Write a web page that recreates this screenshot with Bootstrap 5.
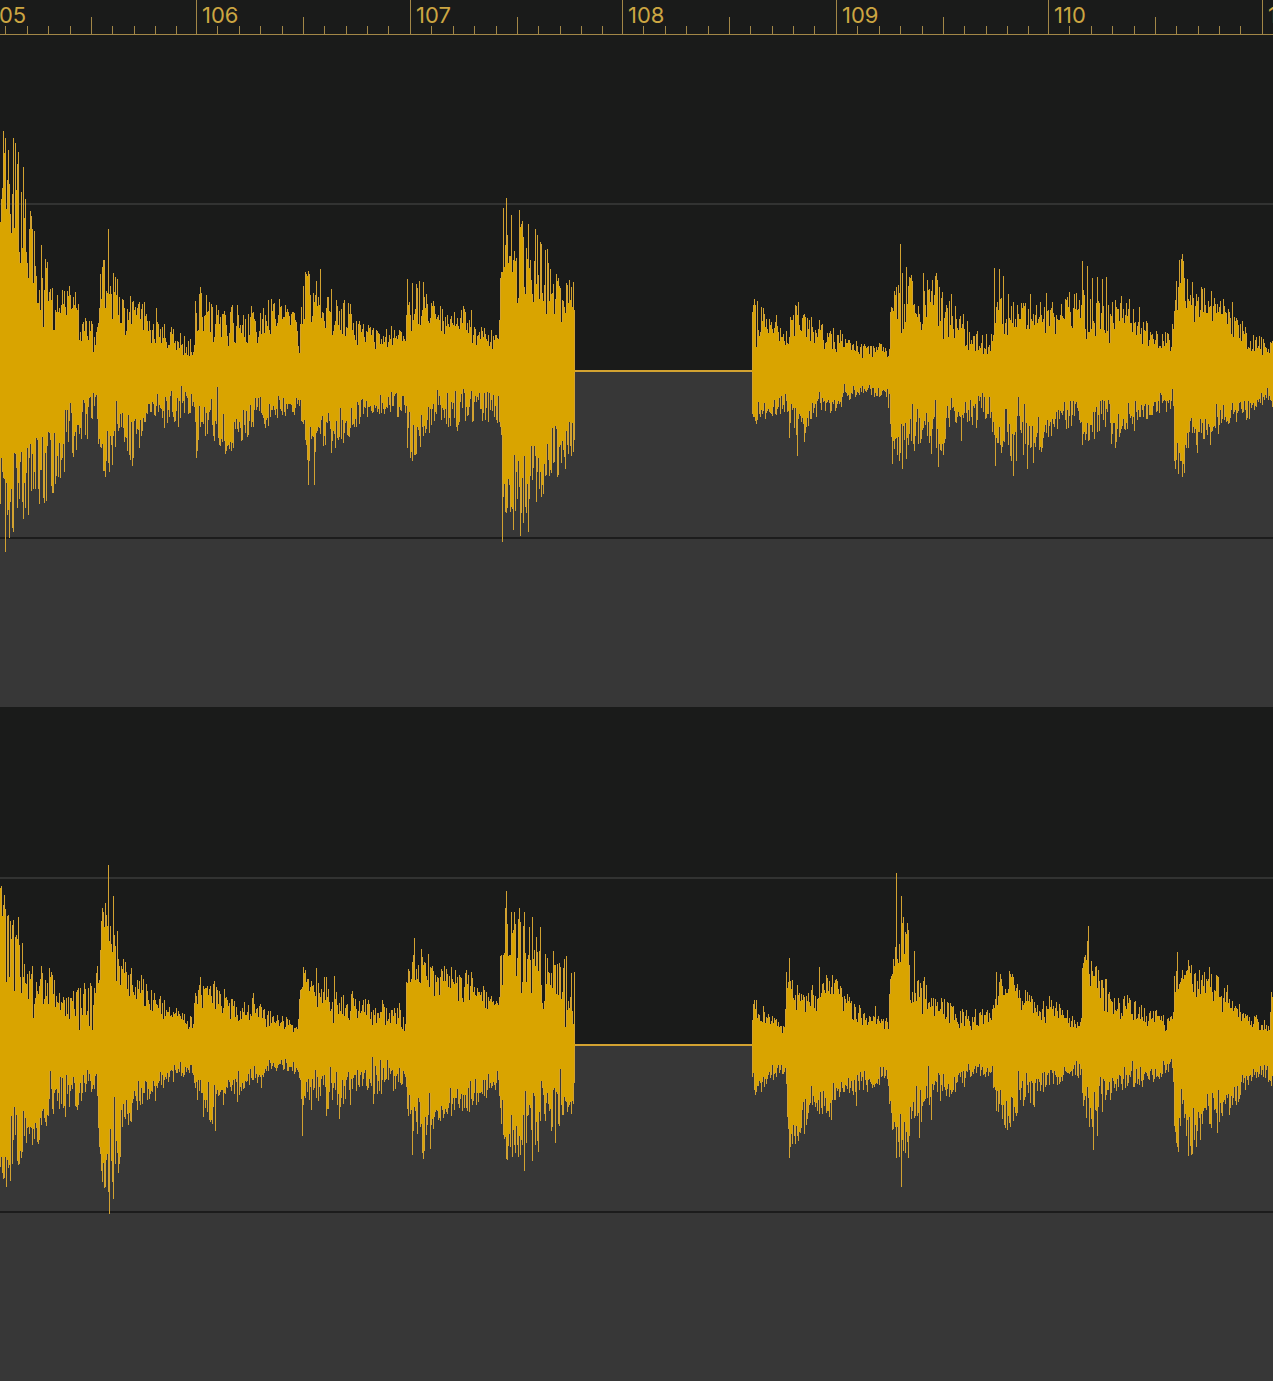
<!DOCTYPE html>
<html lang="en">
<head>
<meta charset="utf-8">
<meta name="viewport" content="width=device-width, initial-scale=1">
<title>Stereo waveform</title>
<link href="https://cdn.jsdelivr.net/npm/bootstrap@5.3.0/dist/css/bootstrap.min.css" rel="stylesheet">
<style>
  :root { --ink: #1a1b1a; --floor: #373737; --wave: #d9a400; --wave-edge: #d2a231; --rule: #a28747; }
  body { background: var(--floor); font-family: Inter, "Liberation Sans", sans-serif; }
  .ruler { height: 35px; margin-bottom: -1px; background: var(--ink); border-bottom: 1px solid var(--rule); z-index: 1; }
  .ruler-inner { margin-left: -16px; }
  .measure { width: 212px; height: 34px; }
  .measure:nth-child(even) { width: 214px; }
  .measure-label { color: #cca642; font-size: 22px; line-height: 30px; padding-left: 6px; }
  .measure-ticks { width: 214px; height: 34px; stroke: var(--rule); stroke-width: 1; }
  .channel { height: 673px; background: linear-gradient(var(--ink) 337px, var(--floor) 337px); }
  .channel + .channel { height: 674px; background: linear-gradient(var(--ink) 338px, var(--floor) 338px); }
  .channel svg { height: 674px; }
  .channel .wave-edge { fill: var(--wave-edge); }
  .channel .wave-body { fill: var(--wave); }
</style>
</head>
<body>
<svg width="0" height="0" class="position-absolute" aria-hidden="true">
  <symbol id="ticks" viewBox="0 0 214 34">
    <path d="M.5 0V34M21.5 26V34M43.5 26V34M64.5 26V34M86.5 26V34M107.5 17V34M128.5 26V34M150.5 26V34M171.5 26V34M192.5 26V34"/>
  </symbol>
</svg>
<main class="overflow-hidden d-flex flex-column">
  <header class="ruler position-relative flex-shrink-0 overflow-hidden">
    <div class="ruler-inner d-flex">
      <div class="measure position-relative flex-shrink-0"><svg class="measure-ticks position-absolute top-0 start-0"><use href="#ticks"/></svg><div class="measure-label">105</div></div>
      <div class="measure position-relative flex-shrink-0"><svg class="measure-ticks position-absolute top-0 start-0"><use href="#ticks"/></svg><div class="measure-label">106</div></div>
      <div class="measure position-relative flex-shrink-0"><svg class="measure-ticks position-absolute top-0 start-0"><use href="#ticks"/></svg><div class="measure-label">107</div></div>
      <div class="measure position-relative flex-shrink-0"><svg class="measure-ticks position-absolute top-0 start-0"><use href="#ticks"/></svg><div class="measure-label">108</div></div>
      <div class="measure position-relative flex-shrink-0"><svg class="measure-ticks position-absolute top-0 start-0"><use href="#ticks"/></svg><div class="measure-label">109</div></div>
      <div class="measure position-relative flex-shrink-0"><svg class="measure-ticks position-absolute top-0 start-0"><use href="#ticks"/></svg><div class="measure-label">110</div></div>
      <div class="measure position-relative flex-shrink-0"><svg class="measure-ticks position-absolute top-0 start-0"><use href="#ticks"/></svg><div class="measure-label">111</div></div>
    </div>
  </header>
  <section class="channel flex-shrink-0 overflow-hidden" aria-label="Left channel">
    <svg class="w-100 d-block" viewBox="0 -337 1273 674" preserveAspectRatio="none" id="left"></svg>
  </section>
  <section class="channel flex-shrink-0 overflow-hidden" aria-label="Right channel">
    <svg class="w-100 d-block" viewBox="0 -338 1273 674" preserveAspectRatio="none" id="right"></svg>
  </section>
</main>
<script>
// Envelope points: column, highest peak, lowest peak. Single peaks: column, level.
const channels = {
  left: {
    top: "0,158,155 2,195,190 3,240,235 7,225,180 13,233,150 18,219,120 24,195,140 27,165,115 31,148,115 36,118,80 41,126,60 45,112,60 50,98,70 53,85,50 60,78,66 67,80,58 73,76,58 77,75,60 80,62,40 87,50,42 90,45,30 92,48,24 95,50,25 97,45,32 99,88,65 103,111,82 106,90,80 108,88,80 111,84,78 113,98,65 117,92,60 120,72,50 125,68,48 130,72,50 135,66,55 144,62,48 150,50,40 156,55,32 160,45,34 170,42,27 180,35,22 190,33,20 193,26,16 195,74,50 200,84,55 206,72,50 212,60,38 217,62,42 225,56,40 229,62,32 240,60,42 250,60,38 256,50,36 260,64,45 268,68,45 275,68,52 285,64,52 290,66,55 297,52,48 299,40,18 301,60,50 303,88,60 308,98,70 313,80,60 320,88,62 325,72,55 331,72,48 337,68,45 345,67,50 353,58,40 360,45,32 370,42,30 376,40,26 385,42,30 395,42,28 400,38,30 405,36,34 407,88,60 412,86,48 420,88,62 424,82,60 428,62,52 434,62,50 440,58,45 450,54,44 460,56,48 467,60,48 472,52,38 480,42,34 490,38,30 498,36,28 499,60,50 500,100,95 502,120,110 503,163,145 506,150,130 508,143,118 512,145,105 517,138,80 523,137,90 530,133,90 536,128,85 541,118,78 547,112,82 552,100,75 558,95,65 564,88,60 572,80,65 574,66,63|752,60,56 754,68,60 757,66,40 763,55,45 770,48,38 776,45,35 783,38,30 788,40,32 790,58,42 797,65,50 802,60,45 808,48,32 811,50,35 815,38,30 819,45,34 827,38,26 833,38,24 840,34,22 846,32,20 853,30,24 860,28,18 870,26,18 880,25,18 885,22,16 888,15,12 889,30,28 890,60,55 892,88,58 897,82,50 900,78,55 902,90,48 906,98,72 912,90,62 920,75,55 925,85,52 930,82,62 935,88,62 940,78,50 945,65,42 951,66,45 956,58,44 961,56,38 966,52,30 972,42,28 980,35,22 990,36,22 992,32,27 994,90,70 999,88,60 1004,78,50 1010,70,50 1014,60,44 1020,68,50 1025,68,52 1030,70,52 1035,65,52 1041,66,48 1046,68,55 1055,60,50 1063,68,57 1069,74,60 1076,72,52 1082,75,55 1087,70,40 1106,76,50 1109,62,35 1115,65,54 1120,70,55 1127,65,48 1130,66,52 1135,52,38 1140,54,38 1147,48,34 1155,38,27 1160,32,24 1166,36,24 1171,32,28 1173,60,50 1175,80,74 1178,92,82 1182,112,100 1185,92,76 1189,88,74 1195,78,66 1201,78,62 1207,74,62 1212,72,58 1217,68,62 1223,66,56 1228,60,42 1232,56,38 1240,50,40 1245,42,32 1255,34,24 1265,30,22 1272,30,24",
    topPeaks: "3,240 5,233 8,221 10,157 13,233 14,143 18,219 20,108 23,204 27,108 33,88 37,68 40,61 41,126 43,44 53,41 67,80 79,31 103,111 104,111 108,142 112,52 113,98 117,92 130,75 144,69 156,63 200,84 251,65 268,71 299,18 308,100 320,102 331,82 407,92 419,90 433,70 440,65 463,65 471,61 506,173 503,163 511,156 519,161 517,68 541,127 545,121 573,89 754,72 757,70 756,24 763,63 776,56 798,69 811,54 819,51 833,43 840,41 900,127 902,98 901,38 906,104 912,90 923,98 936,98 951,77 963,57 994,103 999,102 1003,95 1030,77 1046,78 1069,79 1082,110 1087,105 1092,93 1097,94 1102,92 1106,94 1109,28 1129,72 1139,64 1179,111 1182,117 1201,84 1211,80 1232,69",
    bottom: "0,135,115 5,145,115 12,148,112 17,142,100 23,148,110 28,140,110 33,125,90 38,122,85 43,125,95 48,115,80 53,118,88 58,100,72 65,92,55 70,85,50 75,75,60 80,76,48 85,66,45 90,58,35 95,50,35 97,62,50 100,75,68 103,100,80 109,98,65 113,90,55 116,80,50 120,75,55 125,72,55 130,85,55 133,90,55 138,82,52 143,62,48 148,55,38 153,48,38 158,42,30 164,52,30 172,50,30 178,54,32 185,40,26 192,38,28 194,60,45 196,86,75 199,58,45 205,60,42 210,68,45 216,62,45 220,70,50 225,80,62 231,76,62 235,65,50 240,64,52 247,62,48 252,55,45 258,42,32 264,54,44 272,50,40 280,40,34 288,42,34 297,42,30 302,50,42 304,85,68 310,82,60 318,80,58 325,70,54 331,74,56 340,70,52 347,65,48 352,55,44 360,50,40 370,42,36 380,40,32 388,45,32 395,44,28 404,38,30 406,45,40 407,75,58 412,82,55 418,76,58 425,70,52 432,58,40 437,52,35 445,52,38 452,50,35 458,52,32 465,50,30 475,48,30 483,50,30 490,46,30 498,48,32 500,65,58 501,90,80 502,165,140 504,150,120 508,140,105 513,145,105 520,145,100 524,140,100 528,140,112 532,135,98 538,120,92 543,115,92 548,102,82 553,95,70 558,98,72 565,90,74 571,80,68 574,76,73|752,48,42 755,55,50 758,52,42 765,45,36 773,42,34 780,40,32 787,42,32 789,60,42 793,50,38 796,60,45 800,50,40 804,60,45 808,50,40 815,42,30 825,42,28 832,40,27 838,38,24 845,32,20 852,30,22 860,22,18 870,22,18 877,28,20 885,20,17 889,40,28 891,70,62 893,80,68 902,90,75 907,80,62 912,80,50 920,80,55 927,80,55 934,74,52 939,82,55 944,76,48 950,65,42 955,50,40 961,56,42 968,50,36 977,50,32 985,44,30 990,46,36 994,75,52 1000,74,50 1008,82,52 1013,92,70 1020,82,55 1027,92,65 1033,85,68 1042,76,62 1050,60,50 1060,52,42 1070,54,36 1078,45,34 1082,70,52 1090,68,56 1097,60,42 1107,52,38 1115,66,45 1122,58,46 1135,52,40 1145,46,36 1155,42,32 1165,38,28 1171,38,30 1173,60,50 1174,95,82 1178,100,80 1184,94,68 1190,75,62 1196,80,62 1203,62,50 1210,64,52 1217,58,46 1225,52,43 1232,48,40 1240,48,42 1248,50,38 1252,36,32 1260,34,26 1265,30,22 1272,38,30",
    bottomPeaks: "1,87 5,181 9,167 23,148 28,144 21,81 37,69 43,127 53,122 50,69 67,39 70,32 83,29 90,26 93,22 96,24 103,100 104,100 109,101 116,30 132,95 171,20 181,15 196,87 197,80 211,28 217,16 225,83 247,66 258,27 308,114 314,114 331,82 391,21 407,77 410,87 415,84 437,19 447,22 455,20 463,18 471,20 479,22 487,21 457,60 502,171 520,165 528,161 524,85 543,123 552,57 789,67 797,85 804,71 844,13 892,93 902,98 912,33 935,29 938,96 943,84 951,27 961,70 976,57 982,22 995,95 1013,105 1018,26 1024,33 1027,98 1064,31 1070,30 1076,31 1082,74 1096,36 1102,29 1108,29 1111,73 1115,77 1134,60 1160,22 1172,18 1178,103 1184,102 1210,74"
  },
  right: {
    top: "0,157,155 2,150,110 4,140,110 8,130,82 13,122,85 18,105,78 22,100,70 25,72,66 28,68,50 33,66,48 41,70,54 46,65,50 49,70,48 55,60,45 60,52,44 68,45,37 76,52,40 80,56,38 90,60,42 95,60,40 97,72,55 99,70,62 100,133,118 105,138,120 110,120,105 113,110,95 115,100,92 121,88,80 126,83,72 132,68,54 141,66,54 148,52,46 155,48,42 162,46,34 170,36,30 180,35,27 186,28,20 193,26,17 195,50,38 200,60,48 206,55,42 214,60,52 222,50,40 226,50,35 232,42,34 240,40,30 250,38,30 253,51,42 258,38,30 264,36,24 275,28,23 285,27,21 297,18,15 299,50,40 300,60,45 303,75,62 308,66,50 316,63,48 320,58,42 326,65,48 330,58,42 334,56,38 340,46,32 348,46,30 353,50,38 362,45,30 370,40,27 380,38,26 390,36,26 398,34,26 403,32,20 405,32,17 406,70,55 411,80,65 414,90,70 417,70,54 421,93,70 426,80,62 428,84,64 432,78,62 437,70,62 445,72,60 455,70,60 465,66,60 470,66,57 477,56,50 480,58,52 490,48,46 498,45,40 499,60,50 500,85,82 503,92,84 505,130,110 508,102,85 511,110,95 515,115,75 519,120,80 524,115,72 532,108,70 536,95,72 540,85,60 543,75,48 548,82,50 553,84,58 557,90,72 560,75,50 565,84,45 570,65,45 574,68,45|752,30,25 754,45,37 760,40,30 766,36,28 772,28,22 780,20,18 784,18,15 785,40,38 786,72,55 792,60,52 800,55,46 808,48,40 812,56,42 819,60,50 822,58,50 827,64,50 833,66,48 840,60,50 848,50,43 856,40,28 862,34,25 870,28,24 880,28,23 886,26,20 888,18,16 890,75,65 893,98,80 897,112,90 900,95,82 903,122,105 908,110,90 911,68,50 920,58,44 925,60,44 930,50,43 940,44,34 950,38,30 957,34,22 967,32,26 970,22,18 976,36,24 985,36,26 991,28,22 993,40,32 996,66,50 1000,66,50 1005,70,52 1012,68,58 1018,55,42 1025,50,42 1030,48,34 1035,38,28 1042,40,30 1050,42,32 1060,38,30 1070,30,23 1080,30,24 1082,35,30 1083,75,62 1087,105,85 1089,92,85 1092,88,76 1098,75,55 1106,62,45 1112,48,33 1120,44,33 1128,48,37 1137,40,32 1148,33,26 1160,32,23 1165,26,20 1172,28,22 1174,82,68 1177,92,76 1182,75,60 1188,78,58 1195,68,54 1205,74,64 1209,74,62 1215,68,48 1224,56,46 1230,45,37 1240,38,32 1250,30,24 1260,25,18 1269,20,15 1271,54,50 1272,54,50",
    topPeaks: "0,157 3,140 6,63 8,130 13,125 14,54 18,128 22,102 33,27 32,79 41,79 49,77 79,15 82,30 89,19 92,15 90,62 103,133 105,142 108,180 113,149 117,114 141,70 200,68 214,64 224,56 253,52 303,78 316,77 326,68 334,69 333,22 363,45 382,45 399,42 401,18 404,14 414,107 421,96 428,91 444,79 466,75 471,73 505,137 506,154 511,133 514,133 519,137 524,133 529,118 532,128 536,108 540,118 521,52 531,52 542,42 545,91 553,94 565,18 566,89 573,21 574,73 754,45 789,87 819,78 826,70 832,70 875,39 896,172 901,149 903,128 908,115 914,94 924,68 944,46 996,73 1012,71 1049,49 1082,77 1088,119 1087,104 1105,66 1127,50 1163,6 1163,30 1177,93 1188,85 1209,78 1227,60",
    bottom: "0,128,100 6,140,105 9,125,98 14,120,88 20,112,88 25,90,78 30,92,76 37,92,75 45,80,64 49,65,52 55,62,45 65,66,42 75,65,42 82,52,36 90,44,34 95,42,35 97,60,52 99,95,85 102,125,115 106,138,116 111,132,115 114,115,85 118,120,92 122,92,76 128,78,62 135,60,50 142,62,52 150,58,46 160,44,36 170,35,29 180,32,24 190,25,20 194,35,28 197,50,42 203,66,54 209,72,48 215,82,55 218,55,44 223,56,42 230,42,34 237,48,34 245,44,30 255,36,25 261,40,30 267,28,22 275,26,20 285,24,19 297,30,24 299,35,25 301,58,45 304,60,46 312,60,44 320,50,37 326,62,44 334,52,34 340,60,40 348,48,34 360,42,30 373,46,30 380,45,30 390,44,30 400,42,30 404,40,32 406,60,48 409,72,62 412,96,78 418,88,70 422,102,72 430,98,66 435,80,62 442,68,60 450,66,56 460,63,54 470,60,50 480,52,44 490,46,40 498,42,37 500,75,60 506,108,80 512,105,72 518,108,70 524,110,72 530,102,65 537,88,58 543,72,50 550,78,58 555,82,56 560,74,50 565,70,55 572,68,55 574,42,40|752,45,35 755,53,46 762,44,36 770,35,28 780,28,22 785,26,22 786,50,40 787,75,60 789,112,100 791,98,84 798,90,72 804,82,64 812,70,57 820,66,54 830,68,54 838,50,42 845,46,37 856,50,37 865,44,36 875,42,36 884,32,27 888,42,32 891,80,65 896,108,90 903,110,90 908,110,82 912,70,55 919,80,60 925,56,46 931,54,40 938,50,38 944,54,38 955,44,32 965,38,28 975,28,23 985,30,24 992,30,26 995,58,45 1001,76,54 1008,80,60 1016,68,50 1025,60,44 1035,54,38 1045,42,34 1055,40,32 1065,30,26 1075,28,22 1081,35,25 1083,70,48 1090,78,60 1097,85,64 1100,55,44 1110,46,34 1120,42,30 1130,40,27 1140,40,29 1152,36,27 1165,26,21 1172,25,20 1174,85,68 1178,104,84 1181,65,50 1186,90,74 1190,106,82 1196,96,80 1204,80,67 1210,80,64 1217,76,60 1224,62,52 1235,56,47 1245,42,36 1255,34,27 1265,30,26 1272,40,32",
    bottomPeaks: "2,128 6,142 14,62 18,120 37,97 50,26 60,32 65,72 83,30 96,29 109,169 113,154 114,52 105,142 118,128 134,46 203,72 209,75 215,86 237,57 261,43 278,8 302,91 315,25 326,71 330,22 339,74 350,60 372,12 373,59 380,15 387,15 412,110 419,57 422,108 423,114 430,104 429,48 451,71 469,67 506,114 525,46 512,112 524,126 518,112 532,116 538,107 541,36 555,98 560,24 789,113 787,72 798,96 831,75 856,61 901,142 896,113 908,113 919,93 928,21 931,75 1018,26 1026,28 1034,62 1093,105 1097,91 1102,67 1110,55 1132,16 1178,107 1181,44 1188,111 1196,102 1217,88 1229,70"
  }
};

// Repeatable noise, so a clip always draws the same way.
function noise(seed) {
  return () => { seed = (seed * 1664525 + 1013904223) >>> 0; return seed / 4294967296; };
}
function levels(text, peaks, seed) {
  const out = new Array(1273).fill(1), rnd = noise(seed);
  for (const clip of text.split("|")) {
    const pts = clip.split(" ").map(p => p.split(",").map(Number));
    for (let i = 0; i < pts.length; i++) {
      const [x0, h0, l0] = pts[i], [x1, h1, l1] = pts[i + 1] || [x0 + 1, h0, l0];
      for (let x = x0; x < x1; x++) {
        const t = (x - x0) / (x1 - x0), hi = h0 + (h1 - h0) * t, lo = l0 + (l1 - l0) * t;
        // Most columns lie in the band; some crests rise over it and some troughs cut below.
        const kind = rnd(), r = rnd();
        const level = kind < 0.2 ? hi * (1 + 0.1 * r)
          : kind > 0.8 ? lo * (0.95 - 0.25 * r)
          : hi - (hi - lo * 0.94) * r;
        out[x] = Math.round(level);
      }
    }
  }
  peaks.split(" ").forEach(p => { const [x, v] = p.split(",").map(Number); if (v > 10) out[x] = v; });
  return out;
}
function columns(up, down) {
  return up.map((v, x) => `M${x} ${-v}h1V${down[x]}h-1z`).join("");
}
const calm = a => a.map((v, x) => Math.min(v, a[x - 1] ?? v, a[x + 1] ?? v));

Object.entries(channels).forEach(([id, c], i) => {
  const up = levels(c.top, c.topPeaks, 71 + i), down = levels(c.bottom, c.bottomPeaks, 913 + i);
  document.getElementById(id).innerHTML =
    `<rect y="-168" width="1273" height="2" fill="#323332"/><rect y="166" width="1273" height="2" fill="#1c1c1c"/>` +
    `<g shape-rendering="crispEdges"><path class="wave-edge" d="${columns(up, down)}"/>` +
    `<path class="wave-body" d="${columns(calm(up), calm(down))}"/>` +
    `<rect class="wave-edge" x="575" y="-1" width="177" height="2"/></g>`;
});
</script>
<script src="https://cdn.jsdelivr.net/npm/bootstrap@5.3.0/dist/js/bootstrap.bundle.min.js"></script>
</body>
</html>
